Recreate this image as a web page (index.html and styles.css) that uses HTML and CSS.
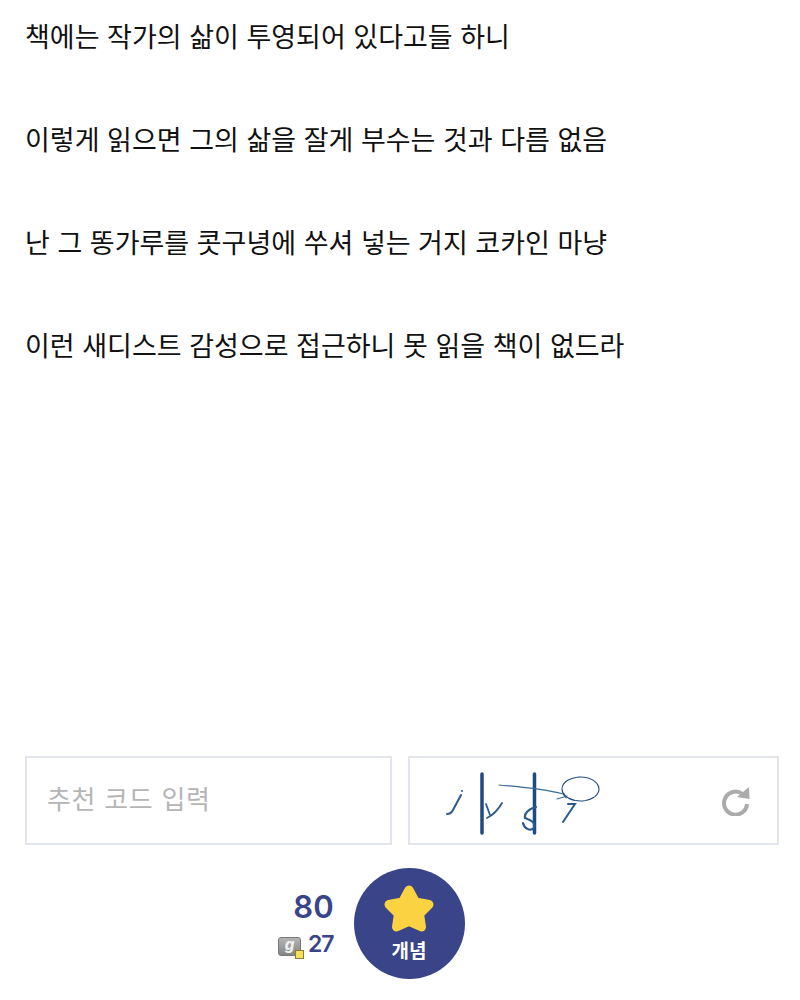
FILE: index.html
```html
<!DOCTYPE html>
<html lang="ko">
<head>
<meta charset="utf-8">
<title>추천</title>
<link rel="stylesheet" href="styles.css">
</head>
<body>
<main class="page">
  <article class="post">
    <p>책에는 작가의 삶이 투영되어 있다고들 하니</p>
    <p>이렇게 읽으면 그의 삶을 잘게 부수는 것과 다름 없음</p>
    <p>난 그 똥가루를 콧구녕에 쑤셔 넣는 거지 코카인 마냥</p>
    <p>이런 새디스트 감성으로 접근하니 못 읽을 책이 없드라</p>
  </article>
  <form class="code-row">
    <div class="box code-input">추천 코드 입력</div>
    <div class="box captcha">
      <svg class="captcha-img" width="170" height="70" viewBox="0 0 170 70" fill="none" stroke="#1f4a80" stroke-linecap="round">
        <path d="M7 48 C10 48 12 46 13 44 L21 29" stroke-width="2" stroke="#2c5a8c"/>
        <circle cx="22" cy="25" r="1" fill="#2c5a8c" stroke="none"/>
        <path d="M42 8 L42 67" stroke-width="3.500"/>
        <path d="M94.500 8 L94.500 67" stroke-width="3.500"/>
        <path d="M46 38 L50 49 M62 37 C58 44 53 49 47 52" stroke-width="1.800" stroke="#2c5a8c"/>
        <path d="M59 19 C80 21 100 22 123 28 L126 32 M117 33 L127 30" stroke-width="1.100" stroke="#3c6a94"/>
        <path d="M96 41 C88 43 84 48 85 52 C90 54 96 56 94 62 C90 66 84 62 83 57" stroke-width="2.200" stroke="#2c5a8c"/>
        <path d="M128 38 L135 38 L123 56" stroke-width="2" stroke="#2c5a8c"/>
        <ellipse cx="140.500" cy="23" rx="18.500" ry="12" stroke-width="1.100" stroke-dasharray="9 1"/>
      </svg>
      <svg class="refresh" width="30" height="30" viewBox="0 0 30 30" fill="none">
        <path d="M21.500 8 A11.500 11.500 0 1 0 26 18" stroke="#ababab" stroke-width="4"/>
        <path d="M16 11 L28 1 L28.500 13 Z" fill="#ababab"/>
      </svg>
    </div>
  </form>
  <section class="vote">
    <div class="counts">
      <div class="count-main">80</div>
      <div class="count-sub">
        <span class="sub-icon"><span class="sub-g">g</span><span class="sub-dot"></span></span>
        <span class="sub-num">27</span>
      </div>
    </div>
    <button class="star-btn" type="button">
      <svg width="54" height="52" viewBox="0 0 54 52">
        <path d="M27 7 L33.500 19 L47 21.500 L37.500 31 L39.500 44 L27 38.500 L14.500 44 L16.500 31 L7 21.500 L20.500 19 Z" fill="#fbd241" stroke="#fbd241" stroke-width="9" stroke-linejoin="round"/>
      </svg>
      <span class="star-label">개념</span>
    </button>
  </section>
</main>
</body>
</html>
```
FILE: styles.css
```css
* { box-sizing: border-box; }
html, body { margin: 0; padding: 0; background: #fff; }
body {
  width: 800px;
  height: 1000px;
  overflow: hidden;
  font-family: "Noto Sans CJK KR", "Noto Sans", sans-serif;
  color: #111;
}
.page { padding: 0 21px 0 25px; }
.post { height: 756px; padding-top: 18px; }
.post p {
  margin: 0 0 68px;
  font-size: 27px;
  line-height: 35px;
  white-space: nowrap;
}
.code-row { display: flex; gap: 16px; height: 89px; }
.box { border: 2px solid #e3e5ec; height: 89px; background: #fff; }
.code-input {
  width: 367px;
  padding: 0 0 7px 20px;
  display: flex;
  align-items: center;
  font-size: 26px;
  letter-spacing: 0.7px;
  color: #b5b5b5;
}
.captcha {
  width: 371px;
  display: flex;
  align-items: center;
}
.captcha-img { margin-left: 30px; }
.refresh { margin-left: auto; margin-right: 26px; }
.vote {
  display: flex;
  align-items: center;
  gap: 20px;
  margin: 23px 0 0 253px;
}
.counts {
  display: flex;
  flex-direction: column;
  align-items: flex-end;
  color: #3a4488;
  font-weight: 600;
  font-family: Inter, "Noto Sans", sans-serif;
}
.count-main { font-size: 31px; line-height: 38px; }
.count-sub { display: flex; align-items: center; gap: 7px; margin-top: 3px; }
.sub-num { font-size: 23px; line-height: 30px; letter-spacing: -1px; }
.sub-icon {
  position: relative;
  width: 23px;
  height: 19px;
  background: linear-gradient(#b5b5b5, #858585);
  border: 1px solid #777;
  border-radius: 3px;
  display: block;
  text-align: center;
  margin-top: 5px;
}
.sub-g {
  display: block;
  color: #eee;
  font-size: 15px;
  font-style: italic;
  font-weight: 800;
  line-height: 14px;
}
.sub-dot {
  position: absolute;
  right: -4px;
  bottom: -4px;
  width: 9px;
  height: 9px;
  background: #f3df58;
  border: 1px solid #8a7d3a;
}
.star-btn {
  width: 111px;
  height: 111px;
  border: 0;
  border-radius: 50%;
  padding: 15px 0 0;
  background: #3a4488;
  color: #fff;
  display: flex;
  flex-direction: column;
  align-items: center;
  font-family: inherit;
}
.star-btn svg { display: block; }
.star-label { font-size: 19px; font-weight: 700; line-height: 26px; margin-top: 2px; }
```
